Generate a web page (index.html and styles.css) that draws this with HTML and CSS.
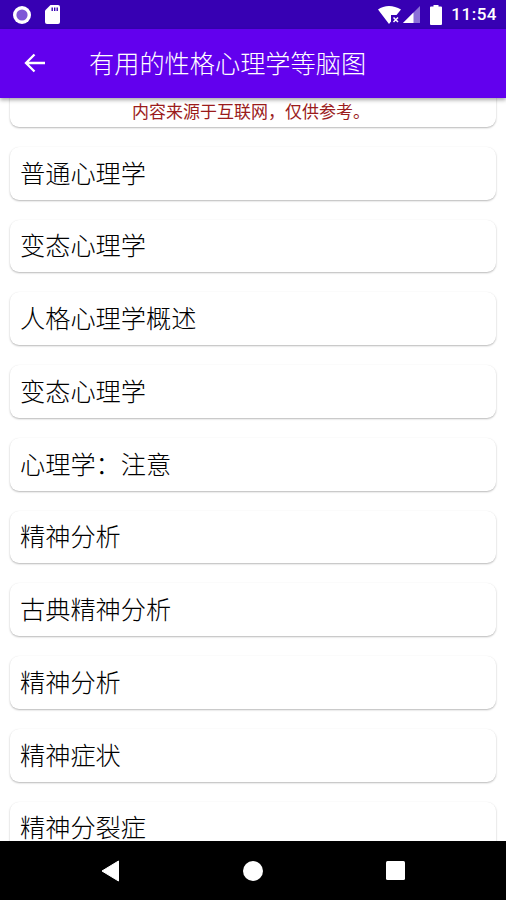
FILE: index.html
```html
<!DOCTYPE html>
<html lang="zh">
<head>
<meta charset="utf-8">
<title>有用的性格心理学等脑图</title>
<link rel="stylesheet" href="styles.css">
</head>
<body>
<div class="phone">
  <header class="status">
    <div class="status-left">
      <svg class="ic-rec" width="18" height="18" viewBox="0 0 18 18"><circle cx="9" cy="9" r="9" fill="#fff"/><circle cx="9" cy="9" r="5.6" fill="#7e57d6"/></svg>
      <svg class="ic-sd" width="15" height="19" viewBox="0 0 15 19"><path d="M5.5 0H13a2 2 0 0 1 2 2v15a2 2 0 0 1-2 2H2a2 2 0 0 1-2-2V5.5z" fill="#fff"/><path d="M6.5 2.500h1.400v3.500H6.500zM9 2.500h1.400v3.500H9zM11.500 2.500h1.400v3.500h-1.400z" fill="#3700b3"/></svg>
    </div>
    <div class="status-right">
      <svg class="ic-wifi" width="23" height="18" viewBox="0 0 23 18"><path d="M0 3.500C3 1.200 7 0 11 0s8.200 1.200 12 3.500l-4.500 5.500h-5.500v6.500L11 18z" fill="#fff"/><path d="M15.500 11.500l4.500 4.500M20 11.500l-4.500 4.500" stroke="#fff" stroke-width="1.500"/></svg>
      <svg class="ic-signal" width="17" height="17" viewBox="0 0 17 17"><path d="M17 0v17H0z" fill="#8b6fd8"/><path d="M10.500 6.500V17H0z" fill="#fff"/></svg>
      <svg class="ic-batt" width="12" height="20" viewBox="0 0 12 20"><path d="M3.500 0h5v1.600H11a1 1 0 0 1 1 1V19a1 1 0 0 1-1 1H1a1 1 0 0 1-1-1V2.600a1 1 0 0 1 1-1h2.500z" fill="#fff"/></svg>
      <span class="time">11:54</span>
    </div>
  </header>
  <div class="appbar">
    <svg class="ic-back" width="22" height="20" viewBox="0 0 22 20"><path d="M21 10H2.500M10.500 1.500L2 10l8.500 8.500" fill="none" stroke="#fff" stroke-width="2.300"/></svg>
    <h1 class="title">有用的性格心理学等脑图</h1>
  </div>
  <main class="content">
    <div class="list">
      <div class="card notice">内容来源于互联网&#xFF0C;仅供参考。</div>
      <div class="card">普通心理学</div>
      <div class="card">变态心理学</div>
      <div class="card">人格心理学概述</div>
      <div class="card">变态心理学</div>
      <div class="card">心理学&#xFF1A;注意</div>
      <div class="card">精神分析</div>
      <div class="card">古典精神分析</div>
      <div class="card">精神分析</div>
      <div class="card">精神症状</div>
      <div class="card">精神分裂症</div>
    </div>
  </main>
  <nav class="navbar">
    <svg width="18" height="22" viewBox="0 0 18 22"><path d="M17.500 1v20L1 11z" fill="#fff" stroke="#fff" stroke-linejoin="round"/></svg>
    <svg width="20" height="20" viewBox="0 0 20 20"><circle cx="10" cy="10" r="10" fill="#fff"/></svg>
    <svg width="19" height="19" viewBox="0 0 19 19"><rect width="19" height="19" rx="1.500" fill="#fff"/></svg>
  </nav>
</div>
</body>
</html>
```
FILE: styles.css
```css
* { box-sizing: border-box; }
html, body { margin: 0; padding: 0; }
body { background: #fff; font-family: "Noto Sans CJK SC", "Noto Sans", sans-serif; }
.phone { width: 506px; height: 900px; display: flex; flex-direction: column; overflow: hidden; }
.status { height: 29px; flex: none; background: #3700b3; display: flex; justify-content: space-between; align-items: center; padding: 0 9px 0 13px; }
.status-left, .status-right { display: flex; align-items: center; }
.status-left { gap: 14px; }
.ic-sd { margin-top: -1px; }
.ic-wifi { margin-right: 2px; }
.ic-signal { margin-right: 10px; }
.ic-batt { margin-right: 9px; }
.time { font: 500 17px/1 Roboto, sans-serif; color: #fff; letter-spacing: 0.5px; }
.appbar { height: 69px; flex: none; background: #6200ee; display: flex; align-items: center; padding: 0 0 2px 24px; gap: 43px; box-shadow: 0 2px 4px rgba(0,0,0,.35); z-index: 2; position: relative; }
.title { margin: 0; font-size: 25.200px; font-weight: 300; color: #fff; line-height: 1; }
.content { flex: 1; overflow: hidden; min-height: 0; background: #fff; }
.list { display: flex; flex-direction: column; gap: 20px; padding: 0 10px; margin-top: -24px; }
.card { height: 52.750px; flex: none; background: #fff; border-radius: 9px; box-shadow: 0 1px 2px rgba(0,0,0,.28), 0 0 1px rgba(0,0,0,.04); padding: 0 0 2px 10px; display: flex; align-items: center; font-size: 25.200px; font-weight: 300; color: #000; line-height: 1; }
.notice { justify-content: center; align-items: flex-end; padding: 0 4px 8px 0; font-size: 17px; font-weight: 400; color: #9b1c1c; }
.navbar { height: 59px; flex: none; background: #000; display: flex; align-items: center; justify-content: space-between; padding: 0 101px; position: relative; z-index: 2; }
```
